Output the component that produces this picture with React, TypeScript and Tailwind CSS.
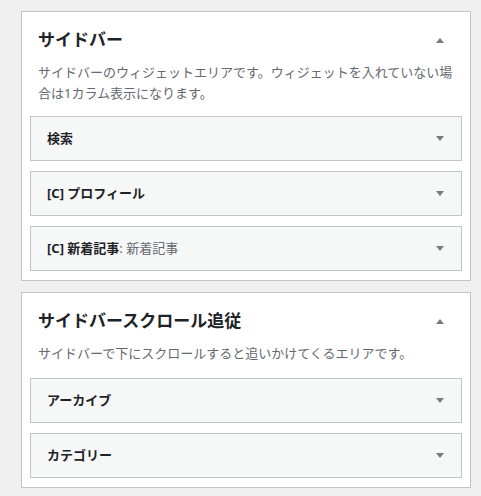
const areas = [
    {
        title: 'サイドバー',
        desc: 'サイドバーのウィジェットエリアです。ウィジェットを入れていない場合は1カラム表示になります。',
        listTop: 'mt-[12px]',
        widgets: [
            { name: '検索' },
            { name: '[C] プロフィール' },
            { name: '[C] 新着記事', sub: '新着記事' },
        ],
    },
    {
        title: 'サイドバースクロール追従',
        desc: 'サイドバーで下にスクロールすると追いかけてくるエリアです。',
        listTop: 'mt-[14px]',
        widgets: [
            { name: 'アーカイブ' },
            { name: 'カテゴリー' },
        ],
    },
]

function Arrow({ up }: { up?: boolean }) {
    return (
        <svg width="8" height="5" viewBox="0 0 8 5" className="shrink-0">
            <polygon points={up ? '0,5 8,5 4,0' : '0,0 8,0 4,5'} fill="#787c82" />
        </svg>
    )
}

export default function App() {
    return (
        <div
            className="min-h-[496px] bg-[#f0f0f1] pl-[21px] pr-[10px] pt-[11px] flex flex-col gap-[11px]"
            style={{ fontFamily: '"Noto Sans", "Noto Sans CJK JP", sans-serif' }}
        >
            {areas.map(a => (
                <div key={a.title} className="w-[450px] bg-white border border-[#c3c4c7] px-[8px] pb-[9px]">
                    <div className="px-[8px] pt-[16px]">
                        <div className="flex items-center justify-between pr-[10px]">
                            <h2 className="text-[17px] leading-[24px] font-bold text-[#1d2327]">{a.title}</h2>
                            <Arrow up />
                        </div>
                        <p className="mt-[10px] text-[13px] leading-[21px] text-[#646970]">{a.desc}</p>
                    </div>
                    <div className={`${a.listTop} flex flex-col gap-[10px]`}>
                        {a.widgets.map(w => (
                            <div
                                key={w.name}
                                className="h-[45px] bg-[#f6f7f7] border border-[#c3c4c7] flex items-center justify-between pl-[16px] pr-[17px]"
                            >
                                <span className="text-[13px] font-bold text-[#1d2327]">
                                    {w.name}
                                    {w.sub && <span className="font-normal text-[#646970]">: {w.sub}</span>}
                                </span>
                                <Arrow />
                            </div>
                        ))}
                    </div>
                </div>
            ))}
        </div>
    )
}
